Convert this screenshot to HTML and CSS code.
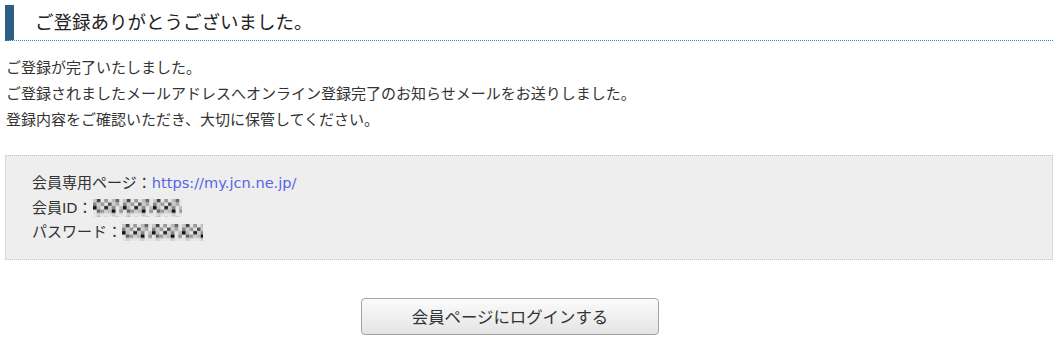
FILE: index.html
```html
<!DOCTYPE html>
<html lang="ja">
<head>
  <meta charset="UTF-8">
  <meta name="viewport" content="width=device-width, initial-scale=1.0">
  <title>ご登録ありがとうございました</title>
  <link rel="stylesheet" href="styles.css">
</head>
<body>

<svg class="defs" width="0" height="0" aria-hidden="true">
  <defs>
    <pattern id="mosaic" width="30" height="17.5" patternUnits="userSpaceOnUse">
      <rect x="0" y="0" width="30" height="17.5" fill="#e6e6e6"/>
      <rect x="0" y="0" width="3.75" height="3.5" fill="#c8c8c8"/>
      <rect x="3.75" y="0" width="3.75" height="3.5" fill="#444"/>
      <rect x="11.25" y="0" width="3.75" height="3.5" fill="#999"/>
      <rect x="18.75" y="0" width="3.75" height="3.5" fill="#bbb"/>
      <rect x="22.5" y="0" width="3.75" height="3.5" fill="#666"/>
      <rect x="0" y="3.5" width="3.75" height="3.5" fill="#888"/>
      <rect x="3.75" y="3.5" width="3.75" height="3.5" fill="#ccc"/>
      <rect x="7.5" y="3.5" width="3.75" height="3.5" fill="#999"/>
      <rect x="15" y="3.5" width="3.75" height="3.5" fill="#555"/>
      <rect x="18.75" y="3.5" width="3.75" height="3.5" fill="#ccc"/>
      <rect x="22.5" y="3.5" width="3.75" height="3.5" fill="#aaa"/>
      <rect x="0" y="7" width="3.75" height="3.5" fill="#111"/>
      <rect x="3.75" y="7" width="3.75" height="3.5" fill="#bbb"/>
      <rect x="11.25" y="7" width="3.75" height="3.5" fill="#222"/>
      <rect x="15" y="7" width="3.75" height="3.5" fill="#ccc"/>
      <rect x="18.75" y="7" width="3.75" height="3.5" fill="#888"/>
      <rect x="26.25" y="7" width="3.75" height="3.5" fill="#bbb"/>
      <rect x="3.75" y="10.5" width="3.75" height="3.5" fill="#666"/>
      <rect x="7.5" y="10.5" width="3.75" height="3.5" fill="#999"/>
      <rect x="11.25" y="10.5" width="3.75" height="3.5" fill="#ccc"/>
      <rect x="15" y="10.5" width="3.75" height="3.5" fill="#bbb"/>
      <rect x="18.75" y="10.5" width="3.75" height="3.5" fill="#111"/>
      <rect x="26.25" y="10.5" width="3.75" height="3.5" fill="#999"/>
      <rect x="3.75" y="14" width="3.75" height="3.5" fill="#d0d0d0"/>
      <rect x="18.75" y="14" width="3.75" height="3.5" fill="#ccc"/>
    </pattern>
  </defs>
</svg>

<div class="container">
  <h2 class="title">ご登録ありがとうございました。</h2>

  <div class="message">
    <p>ご登録が完了いたしました。</p>
    <p>ご登録されましたメールアドレスへオンライン登録完了のお知らせメールをお送りしました。</p>
    <p>登録内容をご確認いただき、大切に保管してください。</p>
  </div>

  <div class="info-box">
    <p>会員専用ページ：<a href="#">https://my.jcn.ne.jp/</a></p>
    <p>会員<span class="latin">ID</span>：<svg class="masked" width="89" height="17.5"><rect width="89" height="17.5" fill="url(#mosaic)"/></svg></p>
    <p>パスワード：<svg class="masked" width="81" height="17.5"><rect width="81" height="17.5" fill="url(#mosaic)"/></svg></p>
  </div>

  <div class="actions">
    <button type="button" class="login-btn">会員ページにログインする</button>
  </div>
</div>

</body>
</html>
```

FILE: styles.css
```css
body { margin: 0; font-family: "Liberation Sans", "Noto Sans CJK JP", sans-serif; color: #333; background: #fff; }
.defs { position: absolute; }
.container { margin: 0 7px 0 5px; padding-top: 5px; }
.title { margin: 0; height: 35px; line-height: 36px; padding-left: 21px; font-size: 18.5px; font-weight: normal; color: #222; border-left: 9px solid #2b5f86; border-bottom: 1px dotted #3a86b8; }
.message { margin-top: 14px; font-size: 15px; line-height: 26px; padding-left: 1px; }
.message p { margin: 0; }
.info-box { margin-top: 22px; padding: 15px 26px 14px; background: #eeeeee; border: 1px dotted #c4c4c4; font-size: 15px; line-height: 24.5px; }
.info-box p { margin: 0; }
.info-box a, .latin { font-family: "DejaVu Sans", sans-serif; font-size: 14.6px; }
.info-box a { color: #5765e6; text-decoration: none; }
.masked { vertical-align: -4px; }
.actions { margin-top: 38px; padding-left: 356px; }
.login-btn { width: 298px; height: 37px; font-family: inherit; font-size: 16.4px; color: #333; background: linear-gradient(#fbfbfb, #e4e4e4); border: 1px solid #a3a3a3; border-radius: 4px; }
```
